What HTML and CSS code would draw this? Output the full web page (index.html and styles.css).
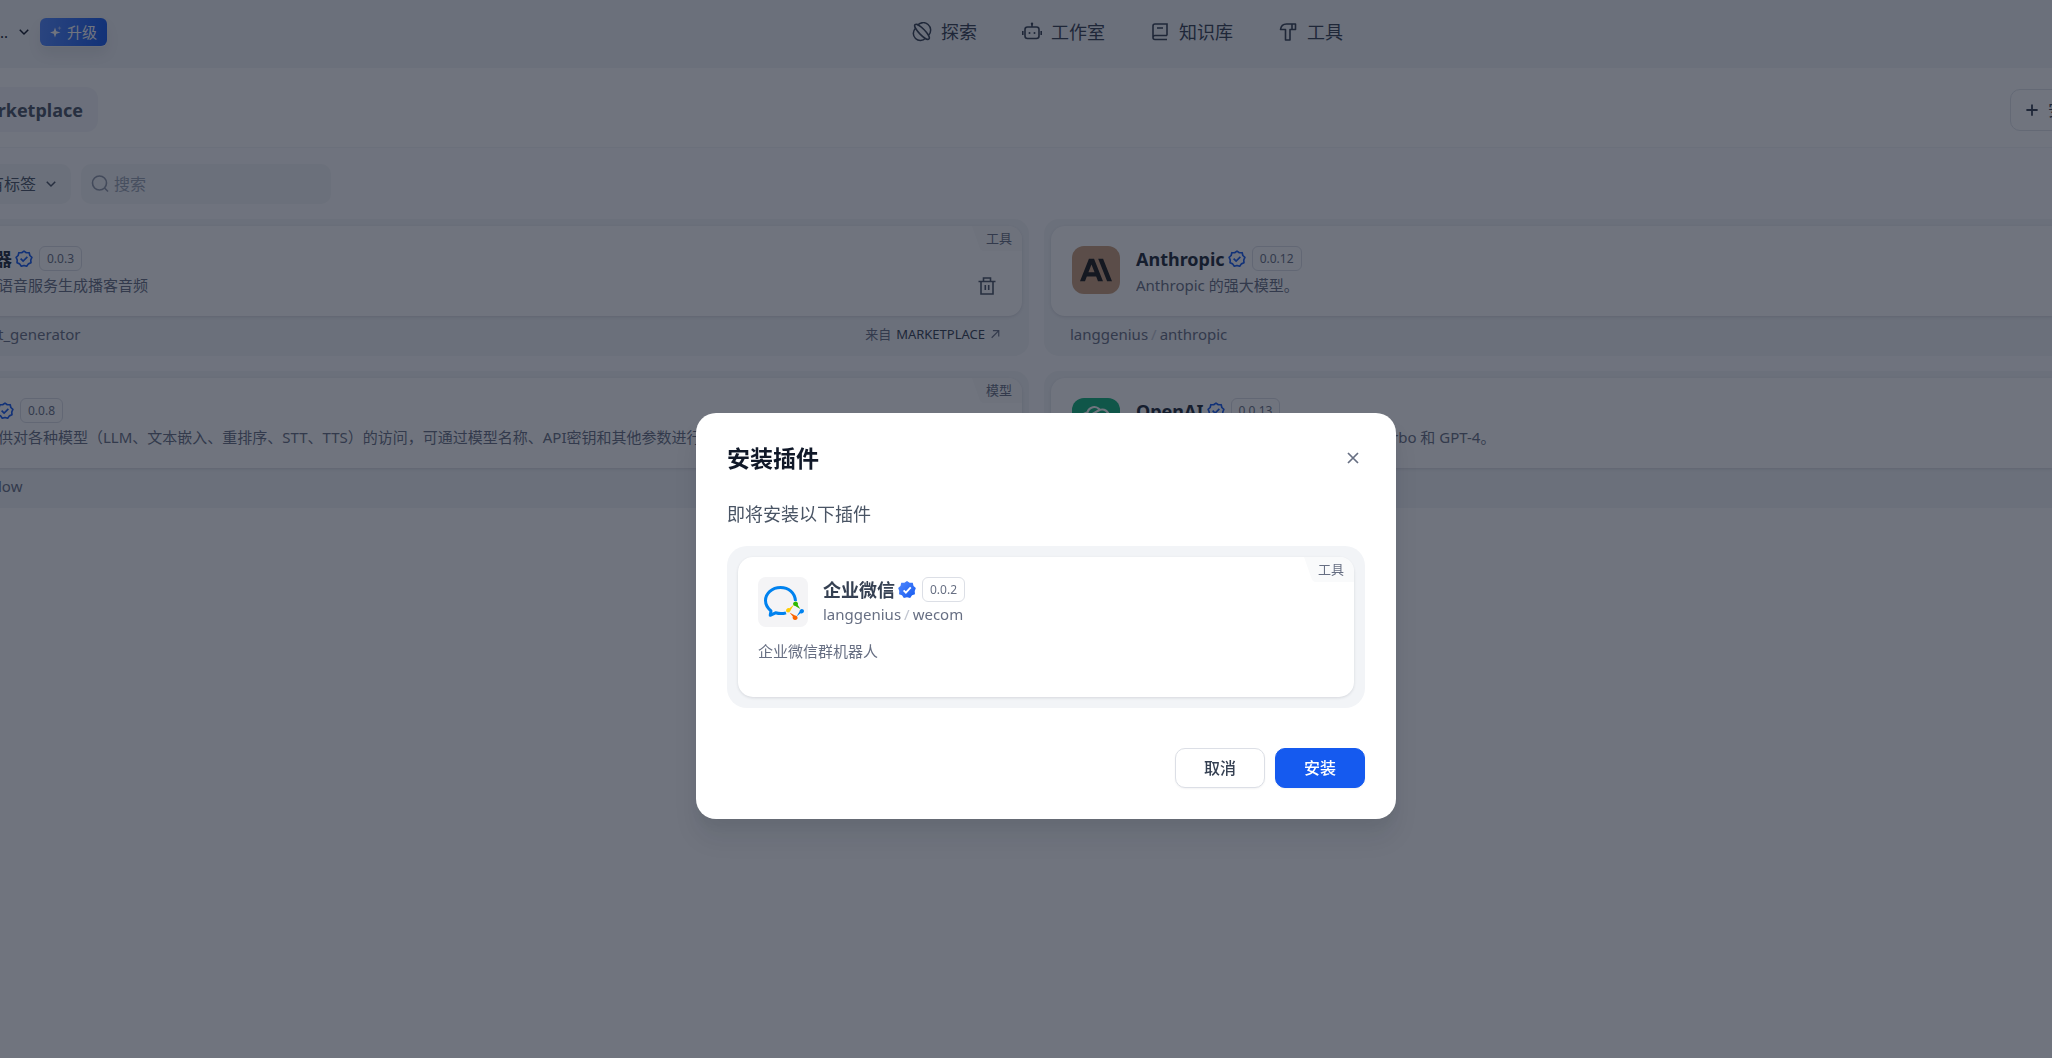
FILE: index.html
```html
<!DOCTYPE html>
<html lang="zh-CN">
<head>
<meta charset="utf-8">
<meta name="viewport" content="width=device-width, initial-scale=1">
<title>安装插件</title>
<link rel="stylesheet" href="styles.css">
</head>
<body>
<svg class="sprite" aria-hidden="true">
  <symbol id="chevron" viewBox="0 0 24 24"><path d="M12 13.17l4.95-4.95 1.41 1.42L12 16 5.64 9.64l1.41-1.42z"/></symbol>
  <symbol id="verified" viewBox="0 0 24 24">
    <path fill="none" stroke="currentColor" stroke-width="2.2" stroke-linejoin="round" d="M12 1.500l3.100 2.200 3.800-.1.900 3.700 2.700 2.600-1.500 3.400.3 3.800-3.500 1.400-2.200 3.100-3.600-1-3.600 1-2.200-3.100-3.500-1.400.3-3.800L1.500 9.900l2.700-2.600.9-3.700 3.800.1z"/>
    <path fill="none" stroke="currentColor" stroke-width="2.200" d="M7.500 11.500l3.300 3.300 5.700-5.700"/>
  </symbol>
  <symbol id="corner" viewBox="0 0 14 25"><path d="M0 0h14v25h-1C9 25 8 23 7 20z"/></symbol>
</svg>

<div class="app">
  <header class="topbar">
    <div class="workspace">
      <span class="workspace-name">..</span>
      <svg class="icon-sm"><use href="#chevron"/></svg>
      <button class="upgrade" type="button">
        <svg class="sparkle" viewBox="0 0 12 12"><path d="M5 1.500l1.300 3.700L10.500 6.500 6.300 7.800 5 11.500 3.700 7.800 0 6.500l3.700-1.300z"/><path opacity=".5" d="M9.500 0l.6 1.500 1.500.6-1.500.6-.6 1.500-.6-1.500-1.500-.6 1.500-.6z"/></svg>
        升级
      </button>
    </div>
    <nav class="nav">
      <a href="#"><svg class="icon" viewBox="0 0 20 20"><g fill="none" stroke="currentColor" stroke-width="1.500"><path d="M5.500 3.200A7 7 0 0 1 16.800 13M13.500 16.300A7 7 0 0 1 3.300 6.500"/><ellipse cx="10" cy="9.800" rx="10" ry="3" transform="rotate(46 10 9.800)"/></g></svg>探索</a>
      <a href="#"><svg class="icon" viewBox="0 0 20 20"><g fill="none" stroke="currentColor" stroke-width="1.600"><rect x="3" y="5" width="14" height="11.500" rx="2.500"/><path d="M10 1.500V5M.8 9v4M19.200 9v4"/></g><circle cx="10" cy="1.800" r="1.200"/><circle cx="7.500" cy="11" r="1"/><circle cx="12.500" cy="11" r="1"/></svg>工作室</a>
      <a href="#"><svg class="icon" viewBox="0 0 20 20"><path fill="none" stroke="currentColor" stroke-width="1.600" d="M17 13.500H5a2 2 0 0 0 0 4h12M3 15.500V4a2 2 0 0 1 2-2h12v11.500M7 6h6"/></svg>知识库</a>
      <a href="#"><svg class="icon" viewBox="0 0 20 20"><path fill="none" stroke="currentColor" stroke-width="1.600" stroke-linejoin="round" d="M7.500 18V7.500H2.500C3 4 5 2 8.500 2H17.500v5.500h-5.500V18zM14 2v5.500"/></svg>工具</a>
    </nav>
  </header>

  <div class="tabs">
    <div class="tab"><span>arketplace</span></div>
    <button class="install" type="button"><svg class="icon-sm" viewBox="0 0 16 16"><path fill="none" stroke="currentColor" stroke-width="1.600" d="M8 3v10M3 8h10"/></svg>安装插件</button>
  </div>

  <main class="content">
    <div class="filters">
      <button class="tags" type="button"><span>有标签</span><svg class="icon-sm"><use href="#chevron"/></svg></button>
      <label class="search">
        <svg class="icon" viewBox="0 0 20 20"><g fill="none" stroke="currentColor" stroke-width="1.600"><circle cx="9.500" cy="9" r="7"/><path d="M14.500 14l3.500 3.500"/></g></svg>
        <input type="text" placeholder="搜索" aria-label="搜索">
      </label>
    </div>

    <div class="grid">
      <article class="card cut">
        <div class="card-body">
          <span class="corner"><svg><use href="#corner"/></svg><span>工具</span></span>
          <div class="info">
            <h3>器<svg class="verified"><use href="#verified"/></svg><span class="version">0.0.3</span></h3>
            <p>语音服务生成播客音频</p>
          </div>
          <button class="trash" type="button" aria-label="删除"><svg class="icon" viewBox="0 0 20 20"><path fill="none" stroke="currentColor" stroke-width="1.600" d="M1.500 5.500h17M4 5.500V18h12V5.500M6.500 5V2h7v3M8.300 9v5M11.700 9v5"/></svg></button>
        </div>
        <footer><span>t_generator</span><a class="source" href="#">来自 <b>MARKETPLACE</b><svg viewBox="0 0 12 12"><path fill="none" stroke="currentColor" stroke-width="1.400" d="M2 10.500L10 2.500M3.500 2H10.500v7"/></svg></a></footer>
      </article>

      <article class="card open">
        <div class="card-body">
          <span class="logo anthropic"><svg viewBox="0 0 24 24"><path d="M17.304 3.541h-3.672l6.696 16.918H24Zm-10.608 0L0 20.459h3.744l1.370-3.553h7.005l1.370 3.553h3.744L10.536 3.541Zm-.371 10.223 2.291-5.946 2.291 5.946Z"/></svg></span>
          <div class="info">
            <h3>Anthropic<svg class="verified"><use href="#verified"/></svg><span class="version">0.0.12</span></h3>
            <p>Anthropic 的强大模型。</p>
          </div>
        </div>
        <footer><span>langgenius<i>/</i>anthropic</span></footer>
      </article>

      <article class="card cut">
        <div class="card-body">
          <span class="corner"><svg><use href="#corner"/></svg><span>模型</span></span>
          <div class="info">
            <h3><svg class="verified clipped"><use href="#verified"/></svg><span class="version">0.0.8</span></h3>
            <p>供对各种模型（LLM、文本嵌入、重排序、STT、TTS）的访问，可通过模型名称、API密钥和其他参数进行配置。</p>
          </div>
        </div>
        <footer><span>low</span></footer>
      </article>

      <article class="card open">
        <div class="card-body">
          <span class="logo openai"><svg viewBox="0 0 24 24"><path d="M22.2819 9.8211a5.9847 5.9847 0 0 0-.5157-4.9108 6.0462 6.0462 0 0 0-6.5098-2.9A6.0651 6.0651 0 0 0 4.9807 4.1818a5.9847 5.9847 0 0 0-3.9977 2.9 6.0462 6.0462 0 0 0 .7427 7.0966 5.98 5.98 0 0 0 .511 4.9107 6.051 6.051 0 0 0 6.5146 2.9001A5.9847 5.9847 0 0 0 13.2599 24a6.0557 6.0557 0 0 0 5.7718-4.2058 5.9894 5.9894 0 0 0 3.9977-2.9001 6.0557 6.0557 0 0 0-.7475-7.0729zm-9.022 12.6081a4.4755 4.4755 0 0 1-2.8764-1.0408l.1419-.0804 4.7783-2.7582a.7948.7948 0 0 0 .3927-.6813v-6.7369l2.02 1.1686a.071.071 0 0 1 .038.052v5.5826a4.504 4.504 0 0 1-4.4945 4.4944zm-9.6607-4.1254a4.4708 4.4708 0 0 1-.5346-3.0137l.142.0852 4.783 2.7582a.7712.7712 0 0 0 .7806 0l5.8428-3.3685v2.3324a.0804.0804 0 0 1-.0332.0615L9.74 19.9502a4.4992 4.4992 0 0 1-6.1408-1.6464zM2.3408 7.8956a4.485 4.485 0 0 1 2.3655-1.9728V11.6a.7664.7664 0 0 0 .3879.6765l5.8144 3.3543-2.0201 1.1685a.0757.0757 0 0 1-.071 0l-4.8303-2.7865A4.504 4.504 0 0 1 2.3408 7.872zm16.5963 3.8558L13.1038 8.364 15.1192 7.2a.0757.0757 0 0 1 .071 0l4.8303 2.7913a4.4944 4.4944 0 0 1-.6765 8.1042v-5.6772a.79.79 0 0 0-.407-.667zm2.0107-3.0231l-.142-.0852-4.7735-2.7818a.7759.7759 0 0 0-.7854 0L9.409 9.2297V6.8974a.0662.0662 0 0 1 .0284-.0615l4.8303-2.7866a4.4992 4.4992 0 0 1 6.6802 4.66zM8.3065 12.863l-2.02-1.1638a.0804.0804 0 0 1-.038-.0567V6.0742a4.4992 4.4992 0 0 1 7.3757-3.4537l-.142.0805L8.704 5.459a.7948.7948 0 0 0-.3927.6813zm1.0976-2.3654l2.602-1.4998 2.6069 1.4998v2.9994l-2.5974 1.4997-2.6067-1.4997Z"/></svg></span>
          <div class="info">
            <h3>OpenAI<svg class="verified"><use href="#verified"/></svg><span class="version">0.0.13</span></h3>
            <p>OpenAI 提供的模型，例如 GPT-3.5-Turbo 和 GPT-4。</p>
          </div>
        </div>
        <footer><span>langgenius<i>/</i>openai</span></footer>
      </article>
    </div>
  </main>
</div>

<div class="backdrop">
  <section class="modal" role="dialog" aria-modal="true" aria-labelledby="modal-title">
    <header class="modal-head">
      <h2 id="modal-title">安装插件</h2>
      <button class="close" type="button" aria-label="关闭"><svg viewBox="0 0 12 12"><path fill="none" stroke="currentColor" stroke-width="1.700" d="M1 1l10 10M11 1L1 11"/></svg></button>
    </header>
    <p class="lead">即将安装以下插件</p>
    <div class="plugin-wrap">
      <div class="plugin">
        <span class="corner"><svg><use href="#corner"/></svg><span>工具</span></span>
        <div class="plugin-head">
          <span class="wecom"><svg viewBox="0 0 50 50">
            <path fill="none" stroke="#0082ef" stroke-width="3" stroke-linejoin="round" d="M37.500 24C37 15.500 30.500 10.500 22.500 10.500 14 10.500 7.500 16.500 7.500 23.500c0 4.500 2 7.500 5.500 10.500l-.8 4.300 5.300-2.500c3.500 1 7.500 1 10.500 0"/>
            <path fill="#2eb900" d="M37.300 24.500a2.500 2.500 0 0 1 2.500 3.500l2.500 4-5-3c-2.500 0-3.300-3.800 0-4.500z"/>
            <path fill="#0082ef" d="M46 34a2.500 2.500 0 0 1-3.500 2.300L38.500 39.500l3-5c0-3.500 4.500-3.300 4.500-.5z"/>
            <path fill="#fb6500" d="M37.300 43a2.500 2.500 0 0 1-2.500-3.500L31.500 35.500l5.500 3c3.500.2 3.300 4.500.3 4.500z"/>
            <path fill="#fc0" d="M28 33.500a2.500 2.500 0 0 1 3.500-2.300l4.500-3.700-3.300 5.500c-.5 3.300-4.700 3-4.700.5z"/>
          </svg></span>
          <div class="info">
            <h3>企业微信<svg class="badge" viewBox="0 0 24 24"><defs><linearGradient id="blue" x1="0" y1="0" x2="1" y2="1"><stop offset="0" stop-color="#5289ff"/><stop offset="1" stop-color="#155aef"/></linearGradient></defs><path fill="url(#blue)" d="M12 0l3.500 2.300 4.200.1 1 4.100 3.100 2.900-1.500 3.900.3 4.200-3.900 1.600-2.500 3.500-4.200-1.100-4.200 1.100-2.500-3.500-3.900-1.600.3-4.200L.2 9.400l3.100-2.900 1-4.100 4.200-.1z"/><path fill="none" stroke="#fff" stroke-width="2.500" d="M7.500 12.500l3 3L17 8.500"/></svg><span class="version">0.0.2</span></h3>
            <div class="org">langgenius<i>/</i>wecom</div>
          </div>
        </div>
        <p class="desc">企业微信群机器人</p>
      </div>
    </div>
    <div class="actions">
      <button class="btn" type="button">取消</button>
      <button class="btn primary" type="button">安装</button>
    </div>
  </section>
</div>
</body>
</html>
```

FILE: styles.css
```css
* { box-sizing: border-box; }

body {
  margin: 0;
  background: #fff;
  color: #354052;
  font-family: "Noto Sans", "Noto Sans CJK SC", sans-serif;
  font-size: 15px;
  line-height: 20px;
}

h2, h3, p { margin: 0; }
button, input { font: inherit; color: inherit; }
button { padding: 0; border: 0; background: none; }
a { color: inherit; text-decoration: none; }
svg { flex: none; fill: currentColor; }
i { margin: 0 3px; color: #c0c5d0; font-style: normal; }

.sprite { display: none; }
.icon { width: 20px; height: 20px; }
.icon-sm { width: 18px; height: 18px; }

.app { min-height: 100vh; overflow: hidden; }

/* Top bar */
.topbar {
  display: grid;
  grid-template-columns: 912px 1fr;
  align-items: center;
  height: 68px;
  padding-bottom: 4px;
  background: #f2f4f7;
}
.workspace { display: flex; align-items: center; color: #101828; }
.workspace-name { width: 15px; }
.upgrade {
  display: flex;
  align-items: center;
  gap: 5px;
  height: 28px;
  margin-left: 7px;
  padding: 0 10px;
  border-radius: 6px;
  background: linear-gradient(95deg, #5289ff, #155aef);
  box-shadow: 0 8px 14px rgba(16, 24, 40, .08), 0 1px 0 #fff;
  color: #fff;
}
.sparkle { width: 12px; height: 12px; }
.nav { display: flex; gap: 45px; font-size: 18px; color: #354052; }
.nav a { display: flex; align-items: center; gap: 9px; }

/* Tab row */
.tabs {
  display: flex;
  align-items: center;
  justify-content: space-between;
  height: 80px;
  padding-top: 4px;
  border-bottom: 1px solid #f2f4f7;
  overflow: hidden;
}
.tab {
  display: flex;
  justify-content: flex-end;
  align-items: center;
  width: 98px;
  height: 45px;
  padding-right: 15px;
  border-radius: 0 12px 12px 0;
  background: #f5f6f9;
  font-size: 18px;
  font-weight: 700;
  color: #495464;
}
.install {
  display: flex;
  align-items: center;
  gap: 7px;
  height: 42px;
  margin-right: -73px;
  padding: 0 12px;
  border: 1px solid #e0e3e9;
  border-radius: 10px;
  font-size: 16px;
}

/* Filters */
.content { background: #fdfdfe; }
.filters { display: flex; align-items: center; gap: 10px; padding: 16px 0 15px; }
.tags {
  display: flex;
  align-items: center;
  justify-content: flex-end;
  gap: 6px;
  width: 71px;
  height: 40px;
  padding-right: 11px;
  border-radius: 0 10px 10px 0;
  background: #f2f4f7;
  font-size: 16px;
  white-space: nowrap;
  color: #495464;
  overflow: hidden;
}
.search {
  display: flex;
  align-items: center;
  gap: 4px;
  width: 250px;
  height: 40px;
  padding: 0 9px;
  border-radius: 10px;
  background: #f2f4f7;
  color: #8f97a8;
}
.search input { width: 100%; border: 0; outline: 0; padding: 0; background: none; font-size: 16px; }
.search input::placeholder { color: #98a2b2; opacity: 1; }

/* Plugin grid */
.grid {
  display: grid;
  grid-template-columns: 1029fr 1008fr;
  gap: 15px;
}
.card { min-width: 0; height: 137px; border-radius: 15px; background: #f2f4f7; }
.card.cut { margin-left: -2px; padding: 7px 7px 0 0; border-radius: 0 15px 15px 0; }
.card.open { padding: 7px 0 0 7px; border-radius: 15px 0 0 15px; }
.card-body {
  position: relative;
  display: flex;
  gap: 16px;
  height: 90px;
  padding: 20px 25px 0 0;
  border-radius: 0 14px 14px 0;
  background: #fff;
  box-shadow: 0 1px 3px rgba(16, 24, 40, .12);
}
.open .card-body { padding-left: 21px; border-radius: 14px 0 0 14px; }
.info { flex: 1; min-width: 0; }
h3 {
  display: flex;
  align-items: center;
  height: 25px;
  font-size: 18px;
  font-weight: 700;
  color: #1d2939;
}
.cut h3 { margin-left: -4px; }
.card p {
  height: 28px;
  overflow: hidden;
  line-height: 28px;
  white-space: nowrap;
  text-overflow: ellipsis;
  color: #676f83;
}
.verified { width: 18px; height: 18px; margin-left: 3px; color: #155aef; }
.verified.clipped { margin-left: 2px; }
.version {
  height: 25px;
  margin-left: 6px;
  padding: 0 7px;
  border: 1px solid #dcdfe6;
  border-radius: 6px;
  font-size: 12px;
  font-weight: 400;
  line-height: 23px;
  color: #676f83;
}
.logo { display: grid; place-items: center; width: 48px; height: 48px; border-radius: 12px; }
.anthropic { background: #ca9f7b; color: #191918; }
.anthropic svg { width: 32px; height: 32px; }
.openai { background: #10b37a; color: #fff; }
.openai svg { width: 32px; height: 32px; }
.trash { align-self: flex-end; height: 20px; margin-bottom: 20px; color: #495464; }
.card footer {
  display: flex;
  align-items: center;
  justify-content: space-between;
  height: 36px;
  padding-right: 22px;
  color: #676f83;
}
.open footer { padding-left: 19px; }
.source { display: flex; align-items: center; gap: 5px; font-size: 13px; }
.source b { font-weight: 400; color: #354052; }
.source svg { width: 10px; height: 10px; }

.corner {
  position: absolute;
  top: 0;
  right: 0;
  display: flex;
  height: 25px;
  overflow: hidden;
  border-top-right-radius: 14px;
  color: #676f83;
  font-size: 13px;
  line-height: 25px;
}
.corner svg { width: 14px; height: 25px; color: #f9fafb; }
.corner span { padding-right: 10px; background: #f9fafb; }

/* Modal */
.backdrop {
  position: fixed;
  inset: 0;
  display: flex;
  justify-content: center;
  align-items: flex-start;
  padding: 413px 0 0 40px;
  background: rgba(16, 24, 40, .6);
}
.modal {
  width: 700px;
  padding: 30px 31px 31px;
  border-radius: 20px;
  background: #fff;
  box-shadow: 0 20px 24px rgba(16, 24, 40, .08), 0 8px 8px rgba(16, 24, 40, .03);
}
.modal-head { display: flex; align-items: center; justify-content: space-between; height: 30px; }
h2 { font-size: 23px; font-weight: 700; color: #101828; }
.close { width: 24px; height: 24px; color: #676f83; }
.close svg { display: block; width: 12px; height: 12px; margin: auto; }
.lead { padding: 26px 0 17px; font-size: 18px; line-height: 30px; color: #495464; }
.plugin-wrap { padding: 11px; border-radius: 20px; background: #f2f4f7; }
.plugin {
  position: relative;
  height: 140px;
  padding: 20px;
  border-radius: 15px;
  background: #fff;
  box-shadow: 0 1px 3px rgba(16, 24, 40, .12);
}
.plugin-head { display: flex; gap: 15px; }
.plugin h3 { color: #354052; }
.wecom { width: 50px; height: 50px; border-radius: 8px; background: #f4f4f6; }
.wecom svg { display: block; width: 50px; height: 50px; }
.badge { width: 18px; height: 18px; margin-left: 3px; }
.org { line-height: 24px; color: #676f83; }
.desc { padding-top: 14px; color: #676f83; }
.actions { display: flex; justify-content: flex-end; gap: 10px; padding-top: 40px; }
.btn {
  width: 90px;
  height: 40px;
  border: 1px solid #dcdfe6;
  border-radius: 10px;
  background: #fff;
  box-shadow: 0 1px 2px rgba(16, 24, 40, .05);
  font-size: 16px;
  font-weight: 500;
}
.btn.primary { border-color: #155aef; background: #155aef; color: #fff; }
```
